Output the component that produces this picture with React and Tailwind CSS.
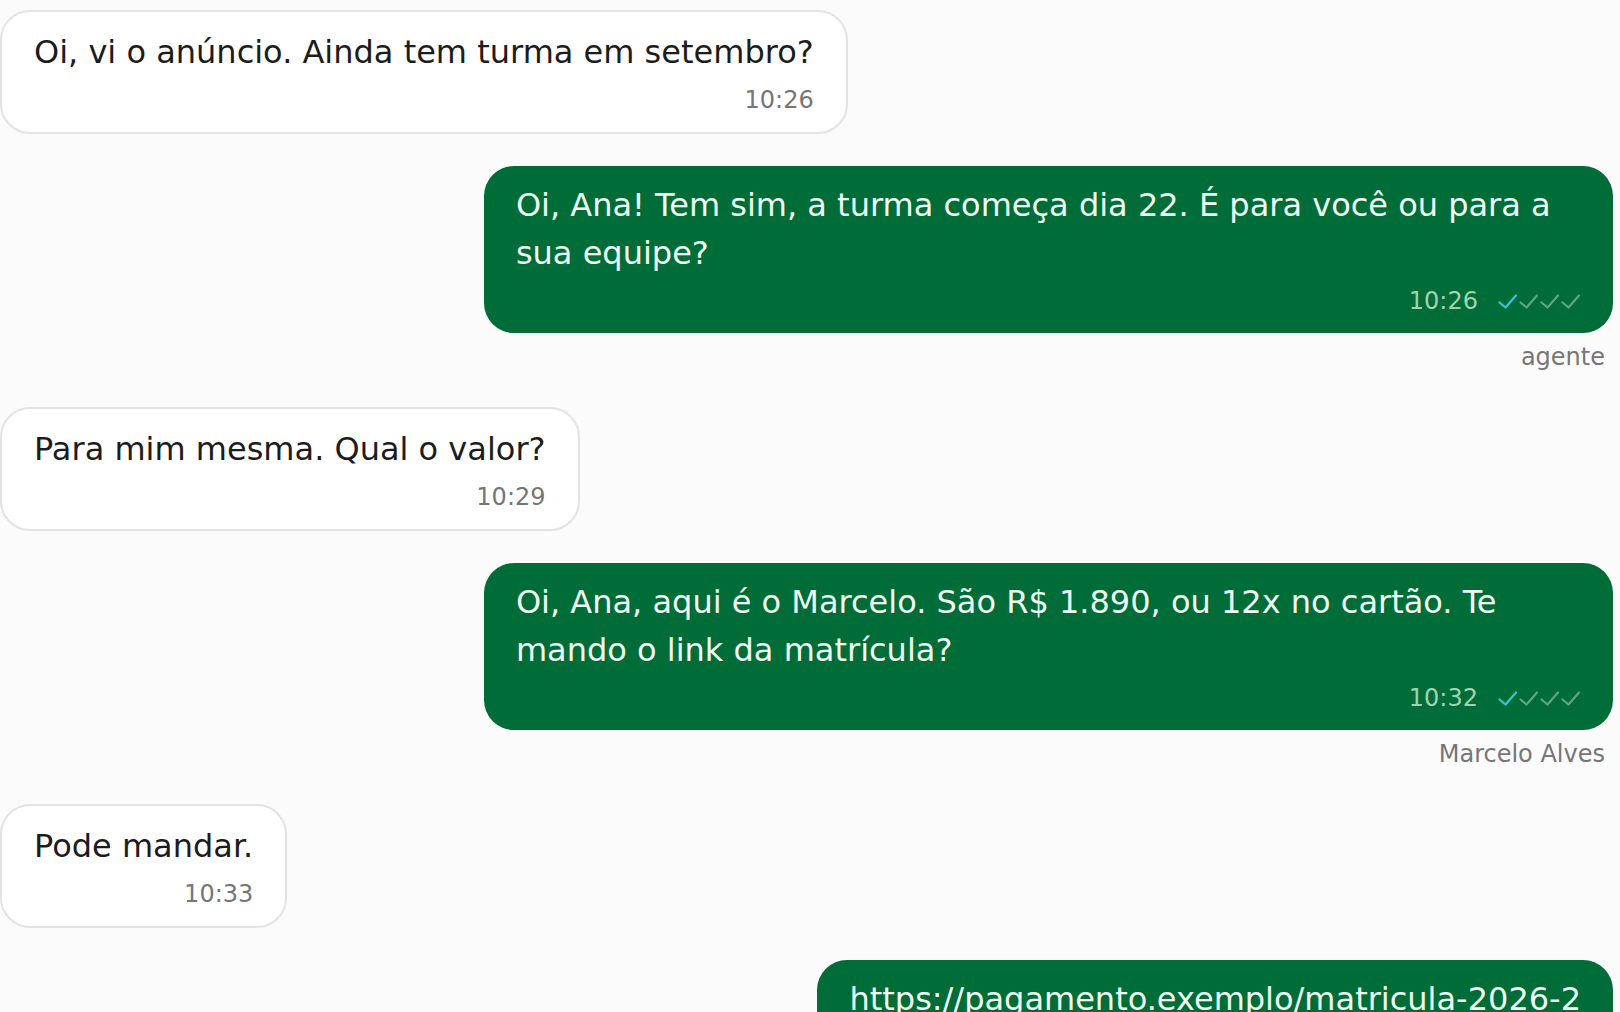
import React from "react";

const font = { fontFamily: '"DejaVu Sans", "Noto Sans", sans-serif' };

function Checks() {
  const offs = [0, 21, 42, 63];
  return (
    <svg width="83" height="15" viewBox="0 0 83 15" fill="none" className="ml-[20px] shrink-0">
      {offs.map((o, i) => (
        <path
          key={i}
          d={`M${o + 1.5} 8.5 L${o + 7.5} 13.5 L${o + 18} 1.5`}
          stroke={i === 0 ? "#35c6da" : "rgba(255,255,255,0.38)"}
          strokeWidth="2.2"
          strokeLinecap="round"
          strokeLinejoin="round"
        />
      ))}
    </svg>
  );
}

function Incoming({ text, time }) {
  return (
    <div className="flex justify-start">
      <div className="max-w-[70%] rounded-[30px] border-2 border-[#e3e3e3] bg-white px-[32px] pt-[16px] pb-[15px]">
        <div className="text-[32px] leading-[48px] text-[#1c1c1c]">{text}</div>
        <div className="mt-[7px] text-right text-[24px] leading-[34px] text-[#767676]">{time}</div>
      </div>
    </div>
  );
}

function Outgoing({ text, time, author }) {
  return (
    <div className="flex flex-col items-end">
      <div className="max-w-[70%] rounded-[30px] bg-[#006d39] px-[32px] pt-[15px] pb-[15px]">
        <div className="text-[32px] leading-[48px] text-[#eefaf2]">{text}</div>
        {time && (
          <div className="mt-[7px] flex items-center justify-end">
            <span className="text-[24px] leading-[34px] text-[#a0d2b4]">{time}</span>
            <Checks />
          </div>
        )}
      </div>
      {author && (
        <div className="mt-[6px] pr-2 text-[24px] leading-[36px] text-[#767676]">{author}</div>
      )}
    </div>
  );
}

export default function App() {
  return (
    <div className="h-[1012px] w-full overflow-hidden bg-[#fbfbfb]" style={font}>
      <div className="flex flex-col gap-8 pt-[10px] pr-[7px]">
        <Incoming text="Oi, vi o anúncio. Ainda tem turma em setembro?" time="10:26" />
        <Outgoing
          text="Oi, Ana! Tem sim, a turma começa dia 22. É para você ou para a sua equipe?"
          time="10:26"
          author="agente"
        />
        <Incoming text="Para mim mesma. Qual o valor?" time="10:29" />
        <Outgoing
          text="Oi, Ana, aqui é o Marcelo. São R$ 1.890, ou 12x no cartão. Te mando o link da matrícula?"
          time="10:32"
          author="Marcelo Alves"
        />
        <Incoming text="Pode mandar." time="10:33" />
        <Outgoing text="https://pagamento.exemplo/matricula-2026-2" time="10:34" />
      </div>
    </div>
  );
}
